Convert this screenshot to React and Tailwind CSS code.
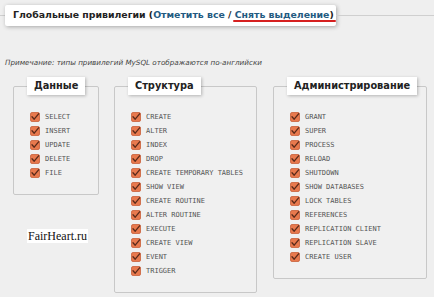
import React from "react";

const Check = () => (
  <svg width="10" height="10" viewBox="0 0 10 10" className="shrink-0">
    <rect x="0.5" y="0.5" width="9" height="9" rx="1.5" fill="#e8794d" stroke="#c9603a" strokeWidth="0.8" />
    <path d="M2 4.8 L4.2 7.2 L8.6 1.8" fill="none" stroke="#5a2a1a" strokeWidth="1.3" strokeLinecap="round" strokeLinejoin="round" />
  </svg>
);

const Box = ({ title, items, width }) => (
  <div className="shrink-0" style={{ width }}>
    <fieldset className="w-full min-w-0 border border-[#c8c8c8] bg-[#f0f0f0] rounded-[2px] p-0">
      <legend className="ml-[13px] bg-white px-[7px] h-[18px] leading-[18px] text-[9.8px] font-bold text-[#222] shadow-[1px_1px_3px_rgba(0,0,0,0.25)] whitespace-nowrap [font-family:'DejaVu_Sans',sans-serif]">
        {title}
      </legend>
      <div className="pt-[15px] pl-[16px] pb-[14px] flex flex-col">
        {items.map((it) => (
          <div key={it} className="h-[14px] flex items-center gap-[5px]">
            <Check />
            <span className="text-[7px] text-[#555] [font-family:'DejaVu_Sans_Mono',monospace] whitespace-nowrap">{it}</span>
          </div>
        ))}
      </div>
    </fieldset>
  </div>
);

export default function App() {
  return (
    <div className="w-[434px] h-[297px] bg-[#efefef] overflow-hidden relative">
      <div className="flex items-center pt-[5px]">
        <div className="w-[5px] h-px bg-[#cfcfcf]" />
        <div className="bg-white h-[21px] w-[331px] pl-[8px] flex items-center shadow-[1px_1px_4px_rgba(0,0,0,0.3)] rounded-[2px] text-[9.35px] font-bold text-[#222] whitespace-nowrap [font-family:'DejaVu_Sans',sans-serif]">
          <span>Глобальные привилегии (</span>
          <span className="text-[#235a81]">Отметить все</span>
          <span>&nbsp;/&nbsp;</span>
          <span className="relative">
            <span className="text-[#235a81]">Снять выделение</span>)
            <span className="absolute left-[-2px] right-[-2px] top-[12px] h-[2px] bg-[#d62020] rounded-full" />
          </span>
        </div>
        <div className="flex-1 h-px bg-[#cfcfcf]" />
      </div>
      <div className="mt-[32px] pl-[5px] text-[7.2px] italic text-[#444] leading-[10px] [font-family:'DejaVu_Sans',sans-serif]">
        Примечание: типы привилегий MySQL отображаются по-английски
      </div>
      <div className="flex items-start pl-[13px] mt-[9px] gap-[15px]">
        <div className="flex flex-col">
          <Box width="86px" title="Данные" items={["SELECT", "INSERT", "UPDATE", "DELETE", "FILE"]} />
          <div className="mt-[34px] ml-[14px] self-start bg-white px-[1px] text-[12px] leading-[14px] text-[#111] [font-family:'Liberation_Serif',serif]">
            FairHeart.ru
          </div>
        </div>
        <Box
          width="143px"
          title="Структура"
          items={["CREATE", "ALTER", "INDEX", "DROP", "CREATE TEMPORARY TABLES", "SHOW VIEW", "CREATE ROUTINE", "ALTER ROUTINE", "EXECUTE", "CREATE VIEW", "EVENT", "TRIGGER"]}
        />
        <div className="ml-px">
          <Box
            width="154px"
            title="Администрирование"
            items={["GRANT", "SUPER", "PROCESS", "RELOAD", "SHUTDOWN", "SHOW DATABASES", "LOCK TABLES", "REFERENCES", "REPLICATION CLIENT", "REPLICATION SLAVE", "CREATE USER"]}
          />
        </div>
      </div>
    </div>
  );
}
